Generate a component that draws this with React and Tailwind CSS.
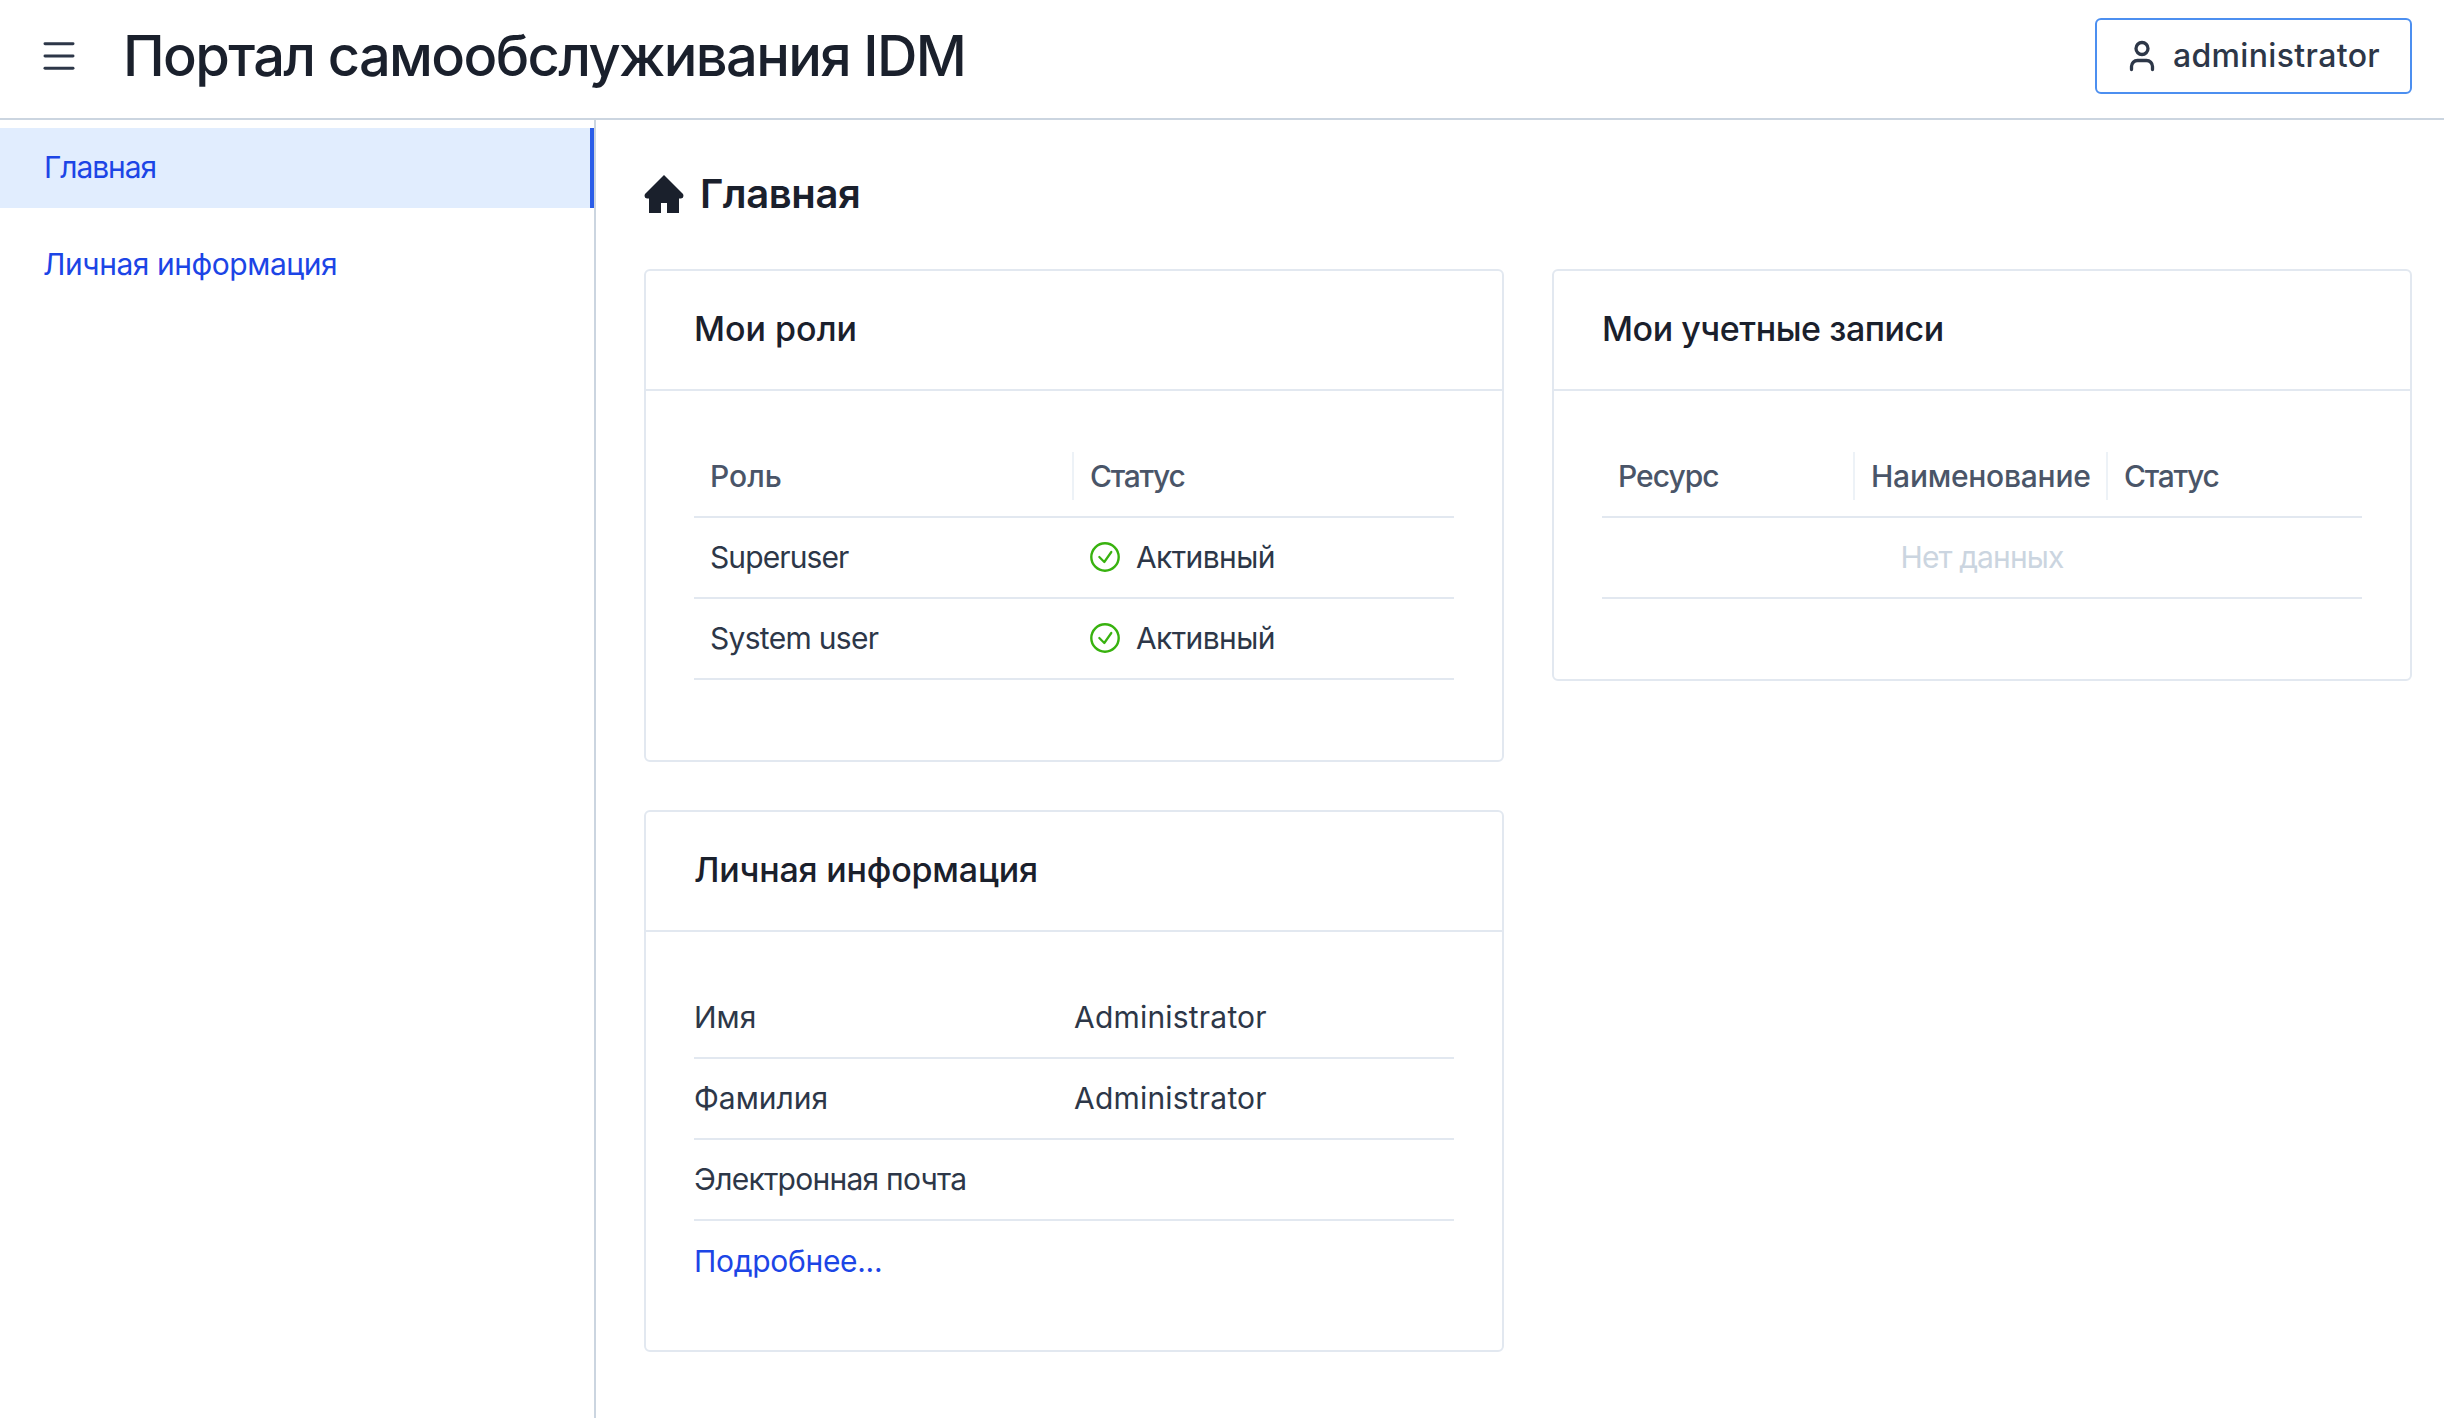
import React from 'react';
import { Menu, User } from 'lucide-react';

const CheckIcon = () => (
  <svg viewBox="0 0 32 32" className="w-[32px] h-[32px] shrink-0 -ml-[1px] -mt-[2px]" fill="none">
    <circle cx="16" cy="16" r="13.7" stroke="#38b20f" strokeWidth="2.4" />
    <path d="M10.3 16l5 5 7-10" stroke="#38b20f" strokeWidth="2.2" strokeLinecap="round" strokeLinejoin="round" />
  </svg>
);

const HomeIcon = () => (
  <svg viewBox="0 0 40 38" className="w-[40px] h-[38px] shrink-0" fill="#1a202c">
    <path d="M20 0 L39 19 Q40.5 23 37 23.5 H35 V38 H23 V28 H17 V38 H5 V23.5 H3 Q-0.5 23 1 19 Z" />
  </svg>
);

const Card = ({ title, children, pt = 'pt-[45px]', pb = 'pb-[80px]', tracking = '' }) => (
  <div className="border-2 border-[#e2e8f0] rounded-[6px] bg-white">
    <div className="h-[120px] flex items-center px-[48px] pb-[4px] border-b-2 border-[#e2e8f0]">
      <h3 className={`text-[34px] font-medium text-[#1a202c] ${tracking}`}>{title}</h3>
    </div>
    <div className={`px-[48px] ${pt} ${pb}`}>{children}</div>
  </div>
);

const Th = ({ children, className, last, tracking = '' }) => (
  <div className={`h-[80px] flex items-center ${className}`}>
    <div className={`h-[48px] w-full flex items-center px-[16px] text-[30px] font-medium text-[#4a5568] ${tracking} ${last ? '' : 'border-r-2 border-[#edf2f7]'}`}>
      {children}
    </div>
  </div>
);

const RoleRow = ({ name, tracking }) => (
  <div className="h-[81px] flex items-center border-b-2 border-[#e2e8f0] text-[30px] text-[#2d3748]">
    <div className={`w-1/2 px-[16px] ${tracking}`}>{name}</div>
    <div className="w-1/2 px-[16px] flex items-center gap-[15px]">
      <CheckIcon />
      <span className="tracking-[-0.6px]">Активный</span>
    </div>
  </div>
);

const InfoRow = ({ label, value, tracking = '' }) => (
  <div className="h-[81px] flex items-center border-b-2 border-[#e2e8f0] text-[30px] text-[#2d3748]">
    <div className={`w-1/2 ${tracking}`}>{label}</div>
    <div className="w-1/2 tracking-[0.2px]">{value}</div>
  </div>
);

export default function App() {
  return (
    <div className="min-h-[1418px] bg-white font-['Inter',sans-serif] flex flex-col">
      <header className="h-[120px] flex items-center pb-[6px] border-b-2 border-[#cbd5e0]">
        <button className="ml-[38px] mr-[43px] text-[#2d3748]">
          <Menu className="w-[42px] h-[42px]" strokeWidth={1.7} />
        </button>
        <h1 className="text-[56px] font-medium tracking-[-1.65px] text-[#1a202c]">Портал самообслуживания IDM</h1>
        <button className="ml-auto mr-[32px] h-[76px] w-[317px] flex items-center justify-center gap-[13px] border-2 border-[#4c8ff0] rounded-[6px] text-[32px] font-medium tracking-[0.35px] text-[#2d3748]">
          <User className="w-[36px] h-[36px] -ml-[3px]" strokeWidth={2.2} />
          administrator
        </button>
      </header>
      <div className="flex flex-1">
        <nav className="w-[596px] shrink-0 border-r-2 border-[#cbd5e0] pt-[8px]">
          <a className="h-[80px] flex items-center pl-[44px] pb-[2px] bg-[#e1edfe] border-r-4 border-[#2a5de8] text-[30px] tracking-[-1.1px] text-[#1c45e6]">Главная</a>
          <a className="mt-[16px] h-[80px] flex items-center pl-[43px] text-[30px] tracking-[-0.45px] text-[#1c45e6]">Личная информация</a>
        </nav>
        <main className="flex-1 pl-[48px] pr-[32px]">
          <div className="h-[149px] flex items-center gap-[16px] pb-[2px]">
            <HomeIcon />
            <h2 className="text-[40px] font-semibold tracking-[-0.4px] text-[#1a202c]">Главная</h2>
          </div>
          <div className="grid grid-cols-2 gap-[48px] items-start">
            <div className="flex flex-col gap-[48px]">
              <Card title="Мои роли">
                <div className="flex border-b-2 border-[#e2e8f0]">
                  <Th className="w-1/2">Роль</Th>
                  <Th className="w-1/2" last tracking="tracking-[-1.3px]">Статус</Th>
                </div>
                <RoleRow name="Superuser" tracking="tracking-[-0.9px]" />
                <RoleRow name="System user" tracking="tracking-[-0.7px]" />
              </Card>
              <Card title="Личная информация" pt="pt-[46px]" pb="pb-[48px]" tracking="tracking-[-0.2px]">
                <InfoRow label="Имя" value="Administrator" />
                <InfoRow label="Фамилия" value="Administrator" />
                <InfoRow label="Электронная почта" value="" tracking="tracking-[-0.75px]" />
                <div className="h-[81px] flex items-center text-[30px] tracking-[-0.3px] text-[#1c45e6]">Подробнее...</div>
              </Card>
            </div>
            <Card title="Мои учетные записи" tracking="tracking-[-0.43px]">
              <div className="flex border-b-2 border-[#e2e8f0]">
                <Th className="w-[253px]" tracking="tracking-[-1px]">Ресурс</Th>
                <Th className="w-[253px]" tracking="tracking-[-0.25px]">Наименование</Th>
                <Th className="flex-1" last tracking="tracking-[-1.3px]">Статус</Th>
              </div>
              <div className="h-[81px] flex items-center justify-center border-b-2 border-[#e2e8f0] text-[30px] tracking-[-0.9px] text-[#cbd5e0]">Нет данных</div>
            </Card>
          </div>
        </main>
      </div>
    </div>
  );
}
